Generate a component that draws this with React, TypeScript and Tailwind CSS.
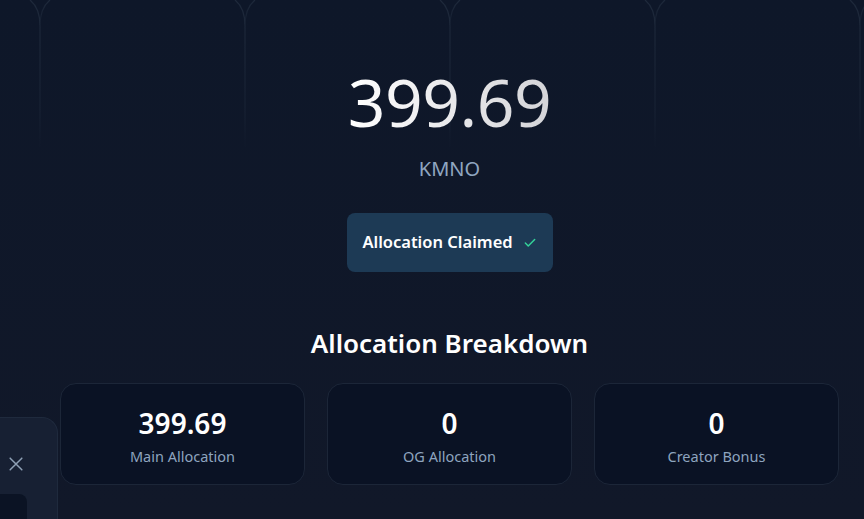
import React from "react"

const cards = [
  { value: "399.69", label: "Main Allocation" },
  { value: "0", label: "OG Allocation" },
  { value: "0", label: "Creator Bonus" },
]

function Arches() {
  const xs = [40, 245, 450, 655, 860]
  return (
    <svg
      className="pointer-events-none absolute inset-x-0 top-0"
      width="864"
      height="160"
      viewBox="0 0 864 160"
      fill="none"
    >
      <defs>
        <linearGradient id="fade" x1="0" y1="0" x2="0" y2="1">
          <stop offset="0" stopColor="#1e293b" stopOpacity="1" />
          <stop offset="0.75" stopColor="#1e293b" stopOpacity="0.5" />
          <stop offset="1" stopColor="#1e293b" stopOpacity="0" />
        </linearGradient>
      </defs>
      {xs.map((x) => (
        <g key={x} stroke="url(#fade)" strokeWidth="1.2">
          <path d={`M${x - 10} 0 Q${x} 8 ${x} 26 L${x} 150`} />
          <path d={`M${x + 10} 0 Q${x} 8 ${x} 26`} />
        </g>
      ))}
    </svg>
  )
}

export default function App() {
  return (
    <section
      className="relative h-[519px] w-[864px] overflow-hidden bg-gradient-to-b from-[#0e1729] to-[#111829]"
      style={{ fontFamily: '"Noto Sans", "Open Sans", sans-serif' }}
    >
      <Arches />

      {/* Main column */}
      <div className="relative flex flex-col items-center pl-[35px] pt-[65px]">
        <h1 className="bg-gradient-to-r from-white to-[#d4d4d8] bg-clip-text text-[66px] leading-[72px] font-normal tracking-[-0.5px] text-transparent">
          399.69
        </h1>
        <p className="mt-[20px] text-[20px] leading-6 text-[#90a6c0]">KMNO</p>

        <button className="mt-[32px] flex h-[59px] w-[206px] items-center justify-center gap-[10px] rounded-lg bg-[#1d3a55] text-[16.5px] font-semibold text-white">
          Allocation Claimed
          <svg width="14" height="14" viewBox="0 0 24 24" fill="none" stroke="#34d399" strokeWidth="2.5" strokeLinecap="round" strokeLinejoin="round">
            <path d="M20 6 9 17l-5-5" />
          </svg>
        </button>

        <h2 className="mt-[55px] text-[26px] leading-8 font-semibold text-white">
          Allocation Breakdown
        </h2>

        {/* Breakdown cards */}
        <div className="mt-[24px] grid w-[779px] grid-cols-3 gap-[22px]">
          {cards.map((c) => (
            <div
              key={c.label}
              className="flex h-[102px] flex-col items-center justify-center rounded-2xl border border-[#1c2638] bg-[#0a1224] pt-[4px]"
            >
              <p className="text-[28px] leading-8 font-semibold text-white">{c.value}</p>
              <p className="mt-[7px] text-[14.5px] leading-5 text-[#8ea4bf]">{c.label}</p>
            </div>
          ))}
        </div>
      </div>

      {/* Side toast panel */}
      <div className="absolute bottom-0 left-0 top-[417px] w-[58px] rounded-tr-2xl border-r border-t border-[#1f2a3d] bg-[#172033]">
        <button className="mt-[36px] ml-[6px] text-[#8ea0b5]">
          <svg width="20" height="20" viewBox="0 0 24 24" fill="none" stroke="currentColor" strokeWidth="1.8" strokeLinecap="round">
            <path d="M5 5l14 14M19 5 5 19" />
          </svg>
        </button>
        <div className="mt-[14px] h-[40px] w-[27px] rounded-r-lg bg-[#0b1324]" />
      </div>
    </section>
  )
}
